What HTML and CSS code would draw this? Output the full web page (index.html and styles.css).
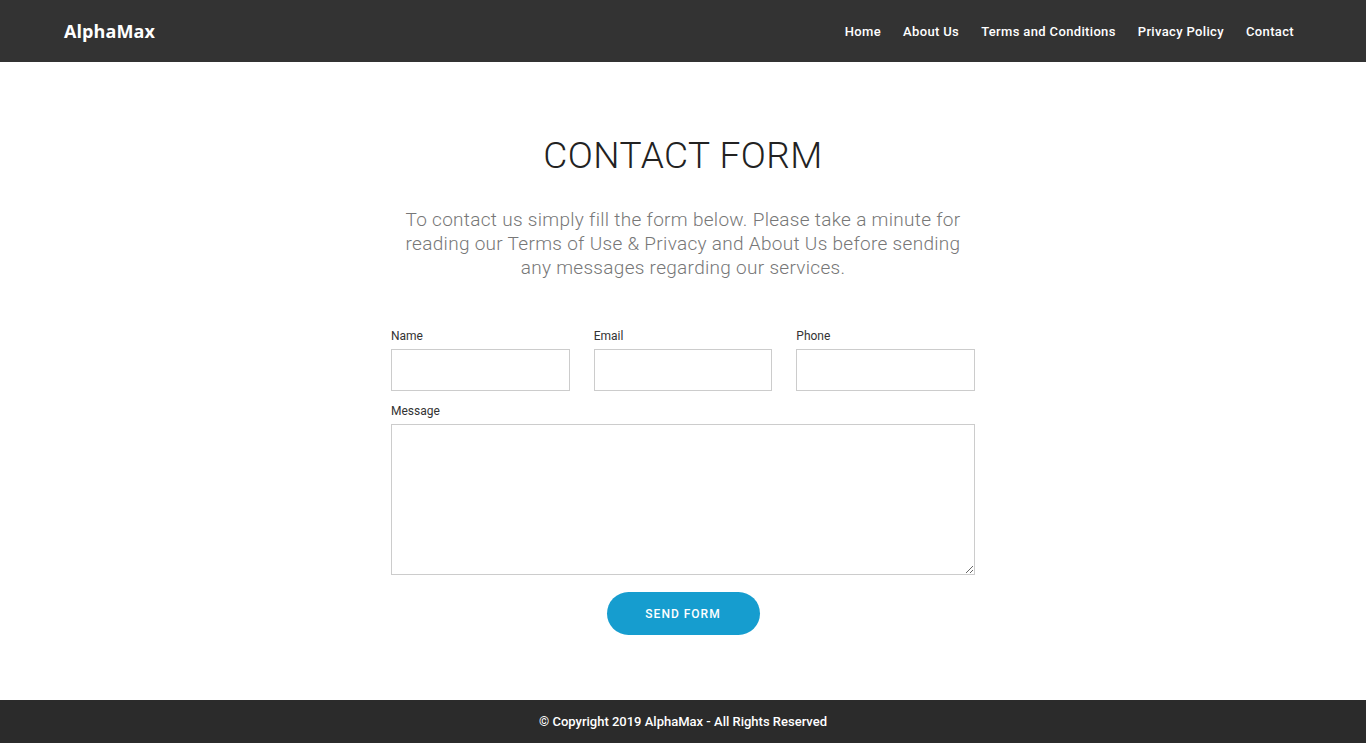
FILE: index.html
```html
<!DOCTYPE html>
<html>
<head>
  <link rel="stylesheet" href="styles.css">
</head>
<body>
  <header class="topbar">
    <a class="brand" href="#">AlphaMax</a>
    <nav class="menu">
      <a href="#">Home</a>
      <a href="#">About Us</a>
      <a href="#">Terms and Conditions</a>
      <a href="#">Privacy Policy</a>
      <a href="#">Contact</a>
    </nav>
  </header>

  <main class="contact">
    <h1>CONTACT FORM</h1>
    <p class="intro">To contact us simply fill the form below. Please take a minute for reading our Terms of Use &amp; Privacy and About Us before sending any messages regarding our services.</p>

    <form class="contact-form">
      <div class="row">
        <div class="field">
          <label for="name">Name</label>
          <input id="name" type="text">
        </div>
        <div class="field">
          <label for="email">Email</label>
          <input id="email" type="email">
        </div>
        <div class="field">
          <label for="phone">Phone</label>
          <input id="phone" type="text">
        </div>
      </div>
      <div class="field">
        <label for="message">Message</label>
        <textarea id="message"></textarea>
      </div>
      <button type="button" class="send-btn">SEND FORM</button>
    </form>
  </main>

  <footer class="bottombar">© Copyright 2019 AlphaMax - All Rights Reserved</footer>
</body>
</html>
```

FILE: styles.css
```css
:root {
    --dark: #333333;
    --footer-dark: #2b2b2b;
    --accent: #169dcf;
    --font-family: Roboto, 'Noto Sans', Arial, sans-serif;
}

body {
  margin: 0;
  font-family: var(--font-family);
  background: #fff;
  color: #333;
}

.topbar {
  height: 62px;
  background-color: var(--dark);
  display: flex;
  align-items: center;
  justify-content: space-between;
  padding: 0 72px 0 64px;
}

.brand {
  color: #fff;
  font-family: 'Open Sans', sans-serif;
  font-weight: 700;
  font-size: 18px;
  text-decoration: none;
  letter-spacing: 0.1px;
}

.menu {
  display: flex;
  gap: 22px;
}

.menu a {
  color: #fff;
  font-size: 13px;
  font-weight: 500;
  letter-spacing: 0.35px;
  text-decoration: none;
}

.contact {
  width: 584px;
  margin: 0 auto;
  padding: 72px 0 65px;
  text-align: center;
}

.contact h1 {
  margin: 0;
  font-size: 37px;
  font-weight: 300;
  line-height: 44px;
  color: #222;
  letter-spacing: 0.5px;
}

.intro {
  margin: 30px auto 0;
  width: 580px;
  font-size: 19px;
  font-weight: 300;
  line-height: 24px;
  color: #777;
  letter-spacing: 0.3px;
}

.contact-form {
  margin-top: 49px;
  text-align: left;
}

.row {
  display: grid;
  grid-template-columns: 1fr 1fr 1fr;
  gap: 24px;
  margin-bottom: 13px;
}

.field label {
  display: block;
  font-size: 12px;
  color: #333;
  line-height: 14px;
  margin-bottom: 6px;
}

.field input,
.field textarea {
  display: block;
  width: 100%;
  box-sizing: border-box;
  border: 1px solid #cccccc;
  border-radius: 0;
  font-family: var(--font-family);
}

.field input {
  height: 42px;
}

.field textarea {
  height: 151px;
}

.send-btn {
  display: block;
  margin: 17px auto 0;
  width: 153px;
  height: 43px;
  border: none;
  border-radius: 22px;
  background-color: var(--accent);
  color: #fff;
  font-family: var(--font-family);
  font-size: 12px;
  font-weight: 500;
  letter-spacing: 1px;
  cursor: pointer;
}

.bottombar {
  height: 43px;
  line-height: 43px;
  background-color: var(--footer-dark);
  color: #fff;
  text-align: center;
  font-size: 13px;
  font-weight: 500;
}
```
